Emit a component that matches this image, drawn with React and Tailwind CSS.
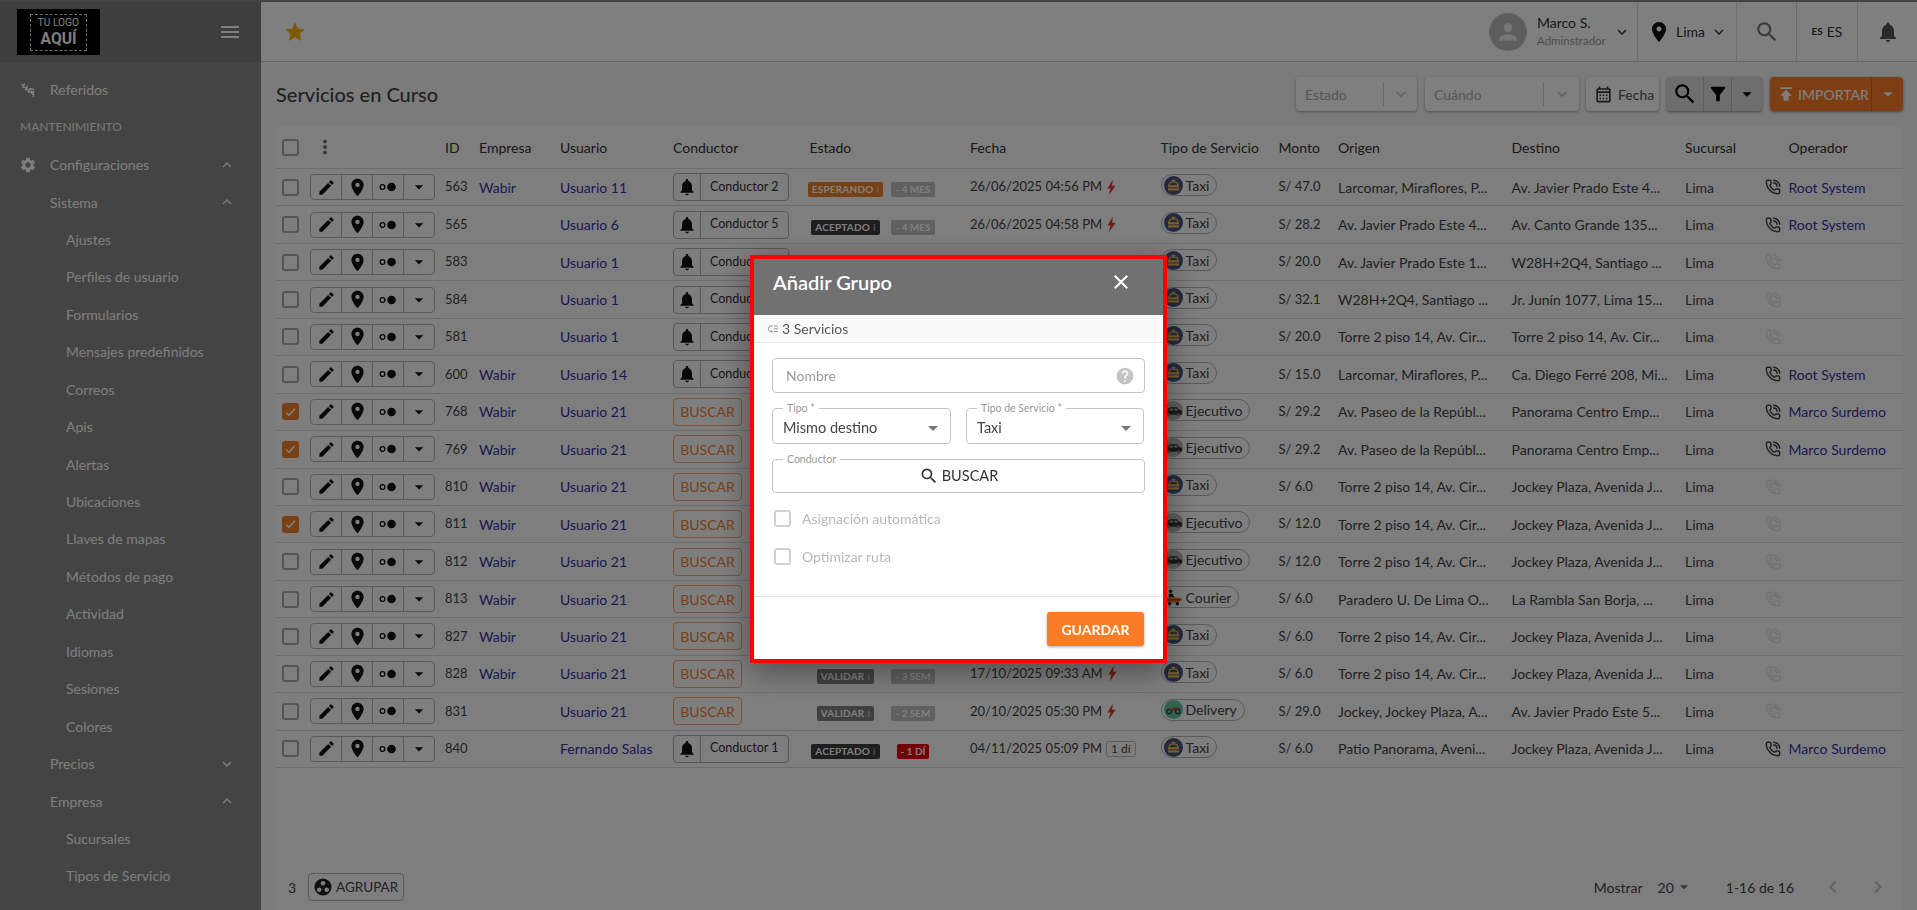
import {
  MdArrowDropDown,
  MdChevronLeft,
  MdChevronRight,
  MdClose,
  MdEdit,
  MdExpandLess,
  MdExpandMore,
  MdFilterAlt,
  MdHelp,
  MdLowPriority,
  MdMenu,
  MdMoreVert,
  MdNotifications,
  MdOutlineCalendarMonth,
  MdPerson,
  MdPlace,
  MdPublish,
  MdSearch,
  MdSettings,
  MdStar,
} from "react-icons/md";
import { PhoneCall } from "lucide-react";

const rowGrid =
  "grid grid-cols-[34px_135px_34px_81px_113px_136.5px_160.5px_190.5px_118px_59.5px_173.5px_173.5px_79.5px_1fr] items-center";

const sideItems = [
  { label: "Referidos", level: 0, icon: "ref" },
  { label: "MANTENIMIENTO", level: -1 },
  { label: "Configuraciones", level: 0, icon: "gear", open: true },
  { label: "Sistema", level: 1, open: true },
  { label: "Ajustes", level: 2 },
  { label: "Perfiles de usuario", level: 2 },
  { label: "Formularios", level: 2 },
  { label: "Mensajes predefinidos", level: 2 },
  { label: "Correos", level: 2 },
  { label: "Apis", level: 2 },
  { label: "Alertas", level: 2 },
  { label: "Ubicaciones", level: 2 },
  { label: "Llaves de mapas", level: 2 },
  { label: "Métodos de pago", level: 2 },
  { label: "Actividad", level: 2 },
  { label: "Idiomas", level: 2 },
  { label: "Sesiones", level: 2 },
  { label: "Colores", level: 2 },
  { label: "Precios", level: 1, open: false },
  { label: "Empresa", level: 1, open: true },
  { label: "Sucursales", level: 2 },
  { label: "Tipos de Servicio", level: 2 },
];

const torre = "Torre 2 piso 14, Av. Cir...";
const jockey = "Jockey Plaza, Avenida J...";
const paseo = "Av. Paseo de la Repúbl...";
const panorama = "Panorama Centro Emp...";

const rows = [
  { id: 563, emp: "Wabir", user: "Usuario 11", cond: "Conductor 2", estado: "ESPERANDO", chip: "- 4 MES", fecha: "26/06/2025 04:56 PM", tipo: "Taxi", monto: "47.0", from: "Larcomar, Miraflores, P...", to: "Av. Javier Prado Este 4...", op: "Root System" },
  { id: 565, user: "Usuario 6", cond: "Conductor 5", estado: "ACEPTADO", chip: "- 4 MES", fecha: "26/06/2025 04:58 PM", tipo: "Taxi", monto: "28.2", from: "Av. Javier Prado Este 4...", to: "Av. Canto Grande 135...", op: "Root System" },
  { id: 583, user: "Usuario 1", cond: "Conductor 3", tipo: "Taxi", monto: "20.0", from: "Av. Javier Prado Este 1...", to: "W28H+2Q4, Santiago ..." },
  { id: 584, user: "Usuario 1", cond: "Conductor 3", tipo: "Taxi", monto: "32.1", from: "W28H+2Q4, Santiago ...", to: "Jr. Junín 1077, Lima 15..." },
  { id: 581, user: "Usuario 1", cond: "Conductor 3", tipo: "Taxi", monto: "20.0", from: torre, to: torre },
  { id: 600, emp: "Wabir", user: "Usuario 14", cond: "Conductor 3", tipo: "Taxi", monto: "15.0", from: "Larcomar, Miraflores, P...", to: "Ca. Diego Ferré 208, Mi...", op: "Root System" },
  { id: 768, checked: true, emp: "Wabir", user: "Usuario 21", tipo: "Ejecutivo", monto: "29.2", from: paseo, to: panorama, op: "Marco Surdemo" },
  { id: 769, checked: true, emp: "Wabir", user: "Usuario 21", tipo: "Ejecutivo", monto: "29.2", from: paseo, to: panorama, op: "Marco Surdemo" },
  { id: 810, emp: "Wabir", user: "Usuario 21", tipo: "Taxi", monto: "6.0", from: torre, to: jockey },
  { id: 811, checked: true, emp: "Wabir", user: "Usuario 21", tipo: "Ejecutivo", monto: "12.0", from: torre, to: jockey },
  { id: 812, emp: "Wabir", user: "Usuario 21", tipo: "Ejecutivo", monto: "12.0", from: torre, to: jockey },
  { id: 813, emp: "Wabir", user: "Usuario 21", tipo: "Courier", monto: "6.0", from: "Paradero U. De Lima O...", to: "La Rambla San Borja, ..." },
  { id: 827, emp: "Wabir", user: "Usuario 21", tipo: "Taxi", monto: "6.0", from: torre, to: jockey },
  { id: 828, emp: "Wabir", user: "Usuario 21", estado: "VALIDAR", chip: "- 3 SEM", fecha: "17/10/2025 09:33 AM", tipo: "Taxi", monto: "6.0", from: torre, to: jockey },
  { id: 831, user: "Usuario 21", estado: "VALIDAR", chip: "- 2 SEM", fecha: "20/10/2025 05:30 PM", tipo: "Delivery", monto: "29.0", from: "Jockey, Jockey Plaza, A...", to: "Av. Javier Prado Este 5..." },
  { id: 840, user: "Fernando Salas", cond: "Conductor 1", estado: "ACEPTADO", chip: "- 1 DÍ", late: true, dias: "1 dí", fecha: "04/11/2025 05:09 PM", tipo: "Taxi", monto: "6.0", from: "Patio Panorama, Aveni...", to: jockey, op: "Marco Surdemo" },
];

const badgeColors = {
  ESPERANDO: "bg-[#f08228]",
  ACEPTADO: "bg-[#3c3c3c]",
  VALIDAR: "bg-[#808080]",
};

const Check = ({ checked, disabled }) => (
  <span
    className={`flex h-[17px] w-[17px] items-center justify-center rounded-[3px] border-2 ${
      checked ? "border-[#f2812c] bg-[#f2812c]" : disabled ? "border-[#d0d0d0]" : "border-[#a8a8a8]"
    }`}
  >
    {checked && (
      <svg viewBox="0 0 16 16" className="h-[14px] w-[14px]" fill="none" stroke="#fff" strokeWidth="1.8">
        <path d="M2.5 8.5l3.6 3.6 7.2-8" />
      </svg>
    )}
  </span>
);

const ReferIcon = () => (
  <svg viewBox="0 0 16 16" className="h-[16px] w-[16px]" fill="none" stroke="#ffffff" strokeWidth="1.5">
    <path d="M1.5 2.500L14 13M4.500 1.500L3 6M7.500 3.500L5.500 8.500M10.500 6L8 11M9 7l5 .5M11 9.500l3.500.5M13 10l.5 5" />
  </svg>
);

const ServiceIcon = ({ tipo }) => {
  if (tipo === "Delivery") {
    return (
      <svg viewBox="0 0 20 20" className="h-[19px] w-[19px] shrink-0">
        <circle cx="10" cy="10" r="10" fill="#5fc5a0" />
        <circle cx="5.500" cy="12" r="2.400" fill="none" stroke="#333" strokeWidth="1.200" />
        <circle cx="14.500" cy="12" r="2.400" fill="none" stroke="#333" strokeWidth="1.200" />
        <path d="M6 11h7l1-3.500h-3.500L9 9.500H6z" fill="#c0392b" />
      </svg>
    );
  }
  if (tipo === "Ejecutivo") {
    return (
      <svg viewBox="0 0 20 20" className="h-[19px] w-[19px] shrink-0">
        <circle cx="10" cy="10" r="10" fill="#bdbdbd" />
        <path d="M1 12.500l2.500-3.500 3-2.500h7l3 3 2.500 1v3l-1 1H2z" fill="#333" />
        <path d="M6.500 8h3v2h-5zM10.500 8h3l2 2h-5z" fill="#aaa" />
        <circle cx="5" cy="14" r="1.700" fill="#777" />
        <circle cx="15" cy="14" r="1.700" fill="#777" />
      </svg>
    );
  }
  if (tipo === "Courier") {
    return (
      <svg viewBox="0 0 20 20" className="h-[19px] w-[19px] shrink-0">
        <circle cx="10" cy="10" r="10" fill="#ffffff" />
        <circle cx="7" cy="3.500" r="1.800" fill="#222" />
        <path d="M5 6h4l2 4h-6z" fill="#222" />
        <path d="M1 10h17l-2 5.500H4z" fill="#f28c28" />
        <path d="M1 12.500h18" stroke="#b71c1c" strokeWidth="1.200" />
        <circle cx="6" cy="16.500" r="1.800" fill="#222" />
        <circle cx="14" cy="16.500" r="1.800" fill="#222" />
      </svg>
    );
  }
  return (
    <svg viewBox="0 0 20 20" className="h-[19px] w-[19px] shrink-0">
      <circle cx="10" cy="10" r="10" fill="#46557f" />
      <path d="M6 6h8l1.800 4.200v5H4.200v-5z" fill="#f4c04e" />
      <path d="M7 7.200h6l1 2.600H6z" fill="#46557f" />
      <rect x="8" y="4" width="4" height="2" fill="#f4c04e" />
      <rect x="4.200" y="12" width="11.600" height="1" fill="#46557f" />
    </svg>
  );
};

const Sidebar = () => (
  <aside className="flex w-[261px] shrink-0 flex-col overflow-hidden bg-[#888888] text-[14px] text-[#fcfcfc]">
    <div className="flex h-[60px] shrink-0 items-center justify-between bg-[#7c7c7c] pl-[17px] pr-[19px]">
      <div className="flex h-[46px] w-[83px] items-center justify-center bg-black">
        <div className="flex h-[37px] w-[57px] flex-col items-center justify-center border border-dashed border-[#d8d8d8] font-['Roboto',sans-serif] text-white">
          <span className="scale-x-[0.92] whitespace-nowrap text-[11px] leading-[12px]">TU LOGO</span>
          <span className="scale-x-[0.92] text-[17px] font-bold leading-[18px]">AQUÍ</span>
        </div>
      </div>
      <MdMenu className="text-[24px] text-[#ffffff]" />
    </div>
    <nav className="pt-[9px]">
      {sideItems.map((item) => (
        <div key={item.label} className="relative flex h-[37.44px] items-center">
          {item.level === -1 ? (
            <span className="pl-[20px] text-[12px] text-[#f0f0f0]">{item.label}</span>
          ) : (
            <>
              {item.icon === "ref" && (
                <span className="absolute left-[20px]">
                  <ReferIcon />
                </span>
              )}
              {item.icon === "gear" && <MdSettings className="absolute left-[19px] text-[18px]" />}
              <span className={item.level === 2 ? "pl-[66px]" : "pl-[50px]"}>{item.label}</span>
              {item.open === true && <MdExpandLess className="absolute left-[218px] text-[18px]" />}
              {item.open === false && <MdExpandMore className="absolute left-[218px] text-[18px]" />}
            </>
          )}
        </div>
      ))}
    </nav>
  </aside>
);

const TopBar = () => (
  <header className="flex h-[60px] shrink-0 items-stretch justify-between border-b border-[#cccccc] bg-white">
    <div className="flex items-center pl-[22px]">
      <MdStar className="text-[24px] text-[#ffb300]" />
    </div>
    <div className="flex items-stretch text-[#333333]">
      <div className="flex w-[148px] items-center">
        <div className="flex h-[38px] w-[38px] items-center justify-center rounded-full bg-[#bdbdbd]">
          <MdPerson className="text-[26px] text-[#eeeeee]" />
        </div>
        <div className="ml-[10px] flex w-[74px] flex-col">
          <span className="text-[14px] leading-[18px]">Marco S.</span>
          <span className="whitespace-nowrap text-[11.5px] leading-[18px] text-[#999999]">Adminstrador</span>
        </div>
        <MdExpandMore className="ml-[2px] text-[18px]" />
      </div>
      <div className="flex w-[99px] items-center border-l border-[#dddddd] pl-[9px]">
        <MdPlace className="text-[24px] text-[#111111]" />
        <span className="ml-[5px] text-[14px]">Lima</span>
        <MdExpandMore className="ml-[5px] text-[18px]" />
      </div>
      <div className="flex w-[60px] items-center justify-center border-l border-[#dddddd]">
        <MdSearch className="text-[26px] text-[#777777]" />
      </div>
      <div className="flex w-[61px] items-center justify-center gap-[4px] border-l border-[#dddddd]">
        <span className="text-[10px] font-bold">ES</span>
        <span className="text-[14px]">ES</span>
      </div>
      <div className="flex w-[60px] items-center justify-center border-l border-[#dddddd]">
        <MdNotifications className="text-[24px] text-[#555555]" />
      </div>
    </div>
  </header>
);

const FilterSelect = ({ label, width, divider }) => (
  <div className={`flex h-[34px] items-center justify-between rounded-[4px] bg-white pl-[9px] text-[14px] text-[#aaaaaa] shadow-[0_1px_3px_rgba(0,0,0,0.35)] ${width}`}>
    <span>{label}</span>
    <div className={`flex h-[24px] items-center justify-center border-l border-[#cccccc] ${divider}`}>
      <MdExpandMore className="text-[20px] text-[#c4c4c4]" />
    </div>
  </div>
);

const Toolbar = () => (
  <div className="mt-[15px] flex h-[34px] shrink-0 items-center justify-between">
    <h1 className="text-[20px] font-medium text-[#444444]">Servicios en Curso</h1>
    <div className="flex items-center">
      <FilterSelect label="Estado" width="w-[121px]" divider="w-[34px]" />
      <div className="ml-[8px]">
        <FilterSelect label="Cuándo" width="w-[154px]" divider="w-[36px]" />
      </div>
      <div className="ml-[7px] flex h-[34px] w-[73px] items-center rounded-[4px] bg-white pl-[8px] text-[14px] text-[#555555] shadow-[0_1px_3px_rgba(0,0,0,0.35)]">
        <MdOutlineCalendarMonth className="text-[19px] text-[#333333]" />
        <span className="ml-[5px]">Fecha</span>
      </div>
      <div className="ml-[8px] flex h-[34px] w-[95px] items-stretch rounded-[4px] bg-[#dcdcdc] text-black shadow-[0_1px_3px_rgba(0,0,0,0.45)]">
        <div className="flex w-[37px] items-center justify-center border-r border-[#bbbbbb]">
          <MdSearch className="text-[26px]" />
        </div>
        <div className="flex w-[28px] items-center justify-center border-r border-[#bbbbbb]">
          <MdFilterAlt className="text-[22px]" />
        </div>
        <div className="flex flex-1 items-center justify-center">
          <MdArrowDropDown className="text-[22px]" />
        </div>
      </div>
      <div className="ml-[8px] flex h-[34px] w-[133px] items-stretch rounded-[4px] bg-[#fb7c26] text-white shadow-[0_1px_3px_rgba(0,0,0,0.45)]">
        <div className="flex w-[102px] items-center border-r border-[#d9641a] pl-[6px]">
          <MdPublish className="text-[20px]" />
          <span className="ml-[2px] text-[14px] font-medium">IMPORTAR</span>
        </div>
        <div className="flex flex-1 items-center justify-center">
          <MdArrowDropDown className="text-[22px]" />
        </div>
      </div>
    </div>
  </div>
);

const Actions = () => (
  <div className="flex h-[26px] w-[125px] items-stretch rounded-[4px] border border-[#b5b5b5] text-[#111111]">
    <span className="flex flex-1 items-center justify-center border-r border-[#b5b5b5]">
      <MdEdit className="text-[19px]" />
    </span>
    <span className="flex flex-1 items-center justify-center border-r border-[#b5b5b5]">
      <MdPlace className="text-[21px]" />
    </span>
    <span className="flex flex-1 items-center justify-center border-r border-[#b5b5b5]">
      <svg viewBox="0 0 18 10" className="h-[10px] w-[18px]">
        <circle cx="3.500" cy="5" r="2.400" fill="none" stroke="#111" strokeWidth="1.300" />
        <circle cx="12.500" cy="5" r="4.300" fill="#111" />
      </svg>
    </span>
    <span className="flex flex-1 items-center justify-center">
      <MdArrowDropDown className="text-[20px]" />
    </span>
  </div>
);

const Conductor = ({ name }) =>
  name ? (
    <div className="flex h-[28px] w-[116px] items-stretch rounded-[4px] border border-[#b0b0b0] text-[12.5px] text-[#333333]">
      <span className="flex w-[27px] items-center justify-center border-r border-[#b0b0b0]">
        <MdNotifications className="text-[20px] text-[#111111]" />
      </span>
      <span className="flex flex-1 items-center pl-[9px]">{name}</span>
    </div>
  ) : (
    <div className="flex h-[28px] w-[69px] items-center justify-center rounded-[4px] border border-[#f3a873] text-[14px] text-[#f2812c]">
      BUSCAR
    </div>
  );

const Estado = ({ row }) =>
  row.estado ? (
    <div className="flex items-center pt-[5px] text-[10px] font-bold text-[#ffffff]">
      <span className="flex w-[72px] justify-center">
        <span className={`flex h-[15px] items-center gap-[3px] whitespace-nowrap rounded-[2px] px-[4px] tracking-[0.2px] ${badgeColors[row.estado]}`}>
          {row.estado}
          <span className="opacity-50">i</span>
        </span>
      </span>
      <span className="ml-[10px] flex w-[43px] justify-center">
        <span className={`flex h-[15px] items-center whitespace-nowrap rounded-[2px] px-[4px] ${row.late ? "bg-[#e8000b]" : "bg-[#c0c0c0]"}`}>
          {row.chip}
        </span>
      </span>
    </div>
  ) : (
    <div />
  );

const Fecha = ({ row }) =>
  row.fecha ? (
    <div className="flex items-center text-[13px]">
      <span>{row.fecha}</span>
      {row.dias ? (
        <span className="ml-[4px] rounded-[3px] border border-[#bbbbbb] px-[4px] text-[12px] leading-[14px]">{row.dias}</span>
      ) : (
        <svg viewBox="0 0 10 18" className="ml-[5px] h-[17px] w-[9px]" fill="#e53935">
          <path d="M6.500 0L0.500 10h3.300L2 18l7.500-11H5.700z" />
        </svg>
      )}
    </div>
  ) : (
    <div />
  );

const Row = ({ row }) => (
  <div className={`${rowGrid} h-[37.44px] border-b border-[#d8d8d8] text-[14px] text-[#444444]`}>
    <span className="pl-[6px]">
      <Check checked={row.checked} />
    </span>
    <Actions />
    <span className="text-[13px]">{row.id}</span>
    <span className="text-[#3a32a8]">{row.emp}</span>
    <span className="whitespace-nowrap text-[#3a32a8]">{row.user}</span>
    <Conductor name={row.cond} />
    <Estado row={row} />
    <Fecha row={row} />
    <div>
      <span className="inline-flex h-[22px] items-center gap-[3px] rounded-full border border-[#b5b5b5] pl-[2px] pr-[7px]">
        <ServiceIcon tipo={row.tipo} />
        {row.tipo}
      </span>
    </div>
    <span className="whitespace-nowrap text-[13px]">S/ {row.monto}</span>
    <span className="whitespace-nowrap">{row.from}</span>
    <span className="whitespace-nowrap">{row.to}</span>
    <span>Lima</span>
    <div className="flex items-center">
      <span className="w-[24px]">
        <PhoneCall size={16} strokeWidth={2.2} className={row.op ? "text-[#444444]" : "text-[#e2e2e2]"} />
      </span>
      <span className="whitespace-nowrap text-[#3a32a8]">{row.op}</span>
    </div>
  </div>
);

const Table = () => (
  <section className="mt-[15px] flex min-h-0 flex-1 flex-col rounded-t-[8px] bg-[#fdfdfd]">
    <div className={`${rowGrid} h-[43px] shrink-0 border-b border-[#d8d8d8] text-[14px] text-[#333333]`}>
      <span className="pl-[6px]">
        <Check />
      </span>
      <span className="pl-[4px]">
        <MdMoreVert className="text-[22px] text-[#666666]" />
      </span>
      <span>ID</span>
      <span>Empresa</span>
      <span>Usuario</span>
      <span>Conductor</span>
      <span>Estado</span>
      <span>Fecha</span>
      <span>Tipo de Servicio</span>
      <span>Monto</span>
      <span>Origen</span>
      <span>Destino</span>
      <span>Sucursal</span>
      <span className="pl-[24px]">Operador</span>
    </div>
    {rows.map((row) => (
      <Row key={row.id} row={row} />
    ))}
    <div className="mt-auto mb-[9px] flex h-[28px] items-center justify-between pl-[12px] pr-[13px] text-[14px] text-[#444444]">
      <div className="flex items-center">
        <span>3</span>
        <div className="ml-[12px] flex h-[28px] w-[96px] items-center justify-center gap-[4px] rounded-[4px] border border-[#b5b5b5] text-[13.5px]">
          <svg viewBox="0 0 20 20" className="h-[18px] w-[18px]">
            <circle cx="10" cy="10" r="9.500" fill="#222" />
            <circle cx="10" cy="5.800" r="2.500" fill="#fff" />
            <circle cx="5.800" cy="13" r="2.500" fill="#fff" />
            <circle cx="14.200" cy="13" r="2.500" fill="#fff" />
          </svg>
          AGRUPAR
        </div>
      </div>
      <div className="flex items-center">
        <span>Mostrar</span>
        <span className="ml-[15px]">20</span>
        <MdArrowDropDown className="text-[20px] text-[#777777]" />
        <span className="ml-[32px]">1-16 de 16</span>
        <MdChevronLeft className="ml-[27px] text-[24px] text-[#c4c4c4]" />
        <MdChevronRight className="ml-[21px] text-[24px] text-[#c4c4c4]" />
      </div>
    </div>
  </section>
);

const OutlineBox = ({ label, className, children }) => (
  <div className={`relative flex items-center rounded-[4px] border border-[#c4c4c4] ${className}`}>
    {label && (
      <span className="absolute -top-[7px] left-[10px] bg-white px-[4px] text-[10.5px] leading-[12px] text-[#999999]">
        {label}
      </span>
    )}
    {children}
  </div>
);

const Modal = () => (
  <div className="fixed inset-0 flex items-start justify-center bg-black/50 pt-[255px]">
    <div className="flex h-[408px] w-[417px] flex-col border-4 border-[#ff0000] bg-white shadow-[0_8px_30px_rgba(0,0,0,0.4)]">
      <div className="flex h-[56px] shrink-0 items-center justify-between bg-[#717171] pb-[10px] pl-[19px] pr-[30px] text-white">
        <h2 className="text-[20px] font-semibold">Añadir Grupo</h2>
        <MdClose className="text-[24px]" />
      </div>
      <div className="flex h-[28px] shrink-0 items-center border-b border-[#e3e3e3] bg-[#fafafa] pl-[13px] text-[14px] text-[#555555]">
        <MdLowPriority className="text-[12px] text-[#999999]" />
        <span className="ml-[3px]">3 Servicios</span>
      </div>
      <div className="flex flex-1 flex-col px-[18px] pt-[15px]">
        <OutlineBox className="h-[35px] justify-between pl-[13px] pr-[9px] text-[14px] text-[#999999]">
          <span>Nombre</span>
          <MdHelp className="text-[20px] text-[#c4c4c4]" />
        </OutlineBox>
        <div className="mt-[15px] flex gap-[15px]">
          <OutlineBox label="Tipo *" className="h-[36px] w-[179px] justify-between pl-[10px] pr-[5px] pt-[3px] text-[14.5px] text-[#444444]">
            <span>Mismo destino</span>
            <MdArrowDropDown className="text-[24px] text-[#777777]" />
          </OutlineBox>
          <OutlineBox label="Tipo de Servicio *" className="h-[36px] w-[178px] justify-between pl-[10px] pr-[5px] pt-[3px] text-[14.5px] text-[#444444]">
            <span>Taxi</span>
            <MdArrowDropDown className="text-[24px] text-[#777777]" />
          </OutlineBox>
        </div>
        <OutlineBox label="Conductor" className="mt-[15px] h-[34px] justify-center gap-[3px] text-[14.5px] text-[#333333]">
          <MdSearch className="text-[20px]" />
          <span>BUSCAR</span>
        </OutlineBox>
        <div className="mt-[7px] flex h-[37.5px] items-center gap-[11px] pl-[2px] text-[14px] text-[#b8b8b8]">
          <Check disabled />
          Asignación automática
        </div>
        <div className="flex h-[37.5px] items-center gap-[11px] pl-[2px] text-[14px] text-[#b8b8b8]">
          <Check disabled />
          Optimizar ruta
        </div>
      </div>
      <div className="flex h-[63px] shrink-0 items-start justify-end border-t border-[#e3e3e3] pr-[19px] pt-[15px]">
        <div className="flex h-[34px] w-[97px] items-center justify-center rounded-[3px] bg-[#fb7c26] text-[14px] font-bold text-white shadow-[0_1px_3px_rgba(0,0,0,0.35)]">
          GUARDAR
        </div>
      </div>
    </div>
  </div>
);

export default function App() {
  return (
    <div className="flex h-screen flex-col overflow-hidden bg-[#f6f6f6] font-['Lato',sans-serif]">
      <div className="h-[2px] shrink-0 bg-[#888888]" />
      <div className="flex min-h-0 flex-1">
        <Sidebar />
        <main className="flex min-w-0 flex-1 flex-col">
          <TopBar />
          <div className="flex min-h-0 flex-1 flex-col pl-[15px] pr-[14px]">
            <Toolbar />
            <Table />
          </div>
        </main>
      </div>
      <Modal />
    </div>
  );
}
